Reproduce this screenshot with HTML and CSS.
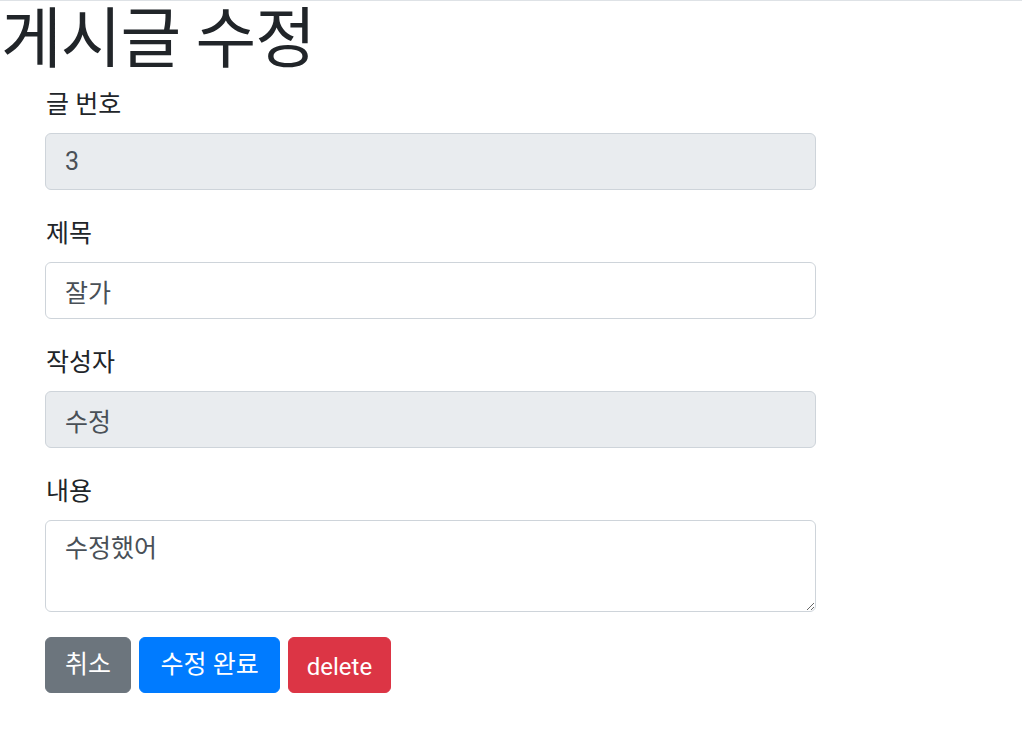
FILE: index.html
```html
<!DOCTYPE html>
<html lang="ko">
<head>
<meta charset="utf-8">
<title>게시글 수정</title>
<link rel="stylesheet" href="styles.css">
</head>
<body>
<div class="page">
  <h1 class="title">게시글 수정</h1>
  <form class="edit-form">
    <div class="form-group">
      <label class="form-label">글 번호</label>
      <input class="form-control" type="text" value="3" disabled>
    </div>
    <div class="form-group">
      <label class="form-label">제목</label>
      <input class="form-control" type="text" value="잘가">
    </div>
    <div class="form-group">
      <label class="form-label">작성자</label>
      <input class="form-control" type="text" value="수정" disabled>
    </div>
    <div class="form-group">
      <label class="form-label">내용</label>
      <textarea class="form-control textarea" rows="2">수정했어</textarea>
    </div>
    <div class="actions">
      <button type="button" class="btn btn-secondary">취소</button>
      <button type="button" class="btn btn-primary">수정 완료</button>
      <button type="button" class="btn btn-danger">delete</button>
    </div>
  </form>
</div>
</body>
</html>
```

FILE: styles.css
```css
* { box-sizing: border-box; }

html, body {
  margin: 0;
  padding: 0;
  background: #fff;
}

body {
  font-family: "Segoe UI", Roboto, "Noto Sans CJK KR", sans-serif;
  color: #212529;
}

.page {
  border-top: 1px solid #dee2e6;
}

.title {
  margin: 0 0 7px 0;
  padding-left: 1px;
  font-size: 66px;
  font-weight: 400;
  line-height: 77px;
  letter-spacing: -1px;
  color: #212529;
}

.edit-form {
  width: 816px;
  padding-left: 45px;
}

.form-group {
  display: flex;
  flex-direction: column;
  margin-bottom: 24px;
}

.form-label {
  display: block;
  font-size: 25px;
  line-height: 36px;
  padding: 2px 0 0 1px;
  margin-bottom: 10px;
  color: #212529;
}

.form-control {
  display: block;
  width: 100%;
  height: 57px;
  padding: 9.6px 19px;
  font-family: inherit;
  font-size: 25px;
  line-height: 36px;
  color: #495057;
  background: #fff;
  border: 1px solid #ced4da;
  border-radius: 6px;
  outline: none;
}

.form-control:disabled {
  background: #e9ecef;
  opacity: 1;
}

.textarea {
  height: 92px;
  resize: vertical;
}

.actions {
  display: flex;
  gap: 8px;
  padding-top: 1px;
}

.btn {
  height: 56px;
  padding: 0 19px;
  font-family: inherit;
  font-size: 25px;
  line-height: 36px;
  color: #fff;
  border: 1px solid transparent;
  border-radius: 6px;
  cursor: pointer;
}

.btn-secondary { background: #6c757d; border-color: #6c757d; }
.btn-primary {
  background: #007bff;
  border-color: #007bff;
  padding: 0 20.5px;
}
.btn-danger {
  background: #dc3545;
  border-color: #dc3545;
  padding: 4px 17.5px 0;
  font-size: 24px;
}
```
